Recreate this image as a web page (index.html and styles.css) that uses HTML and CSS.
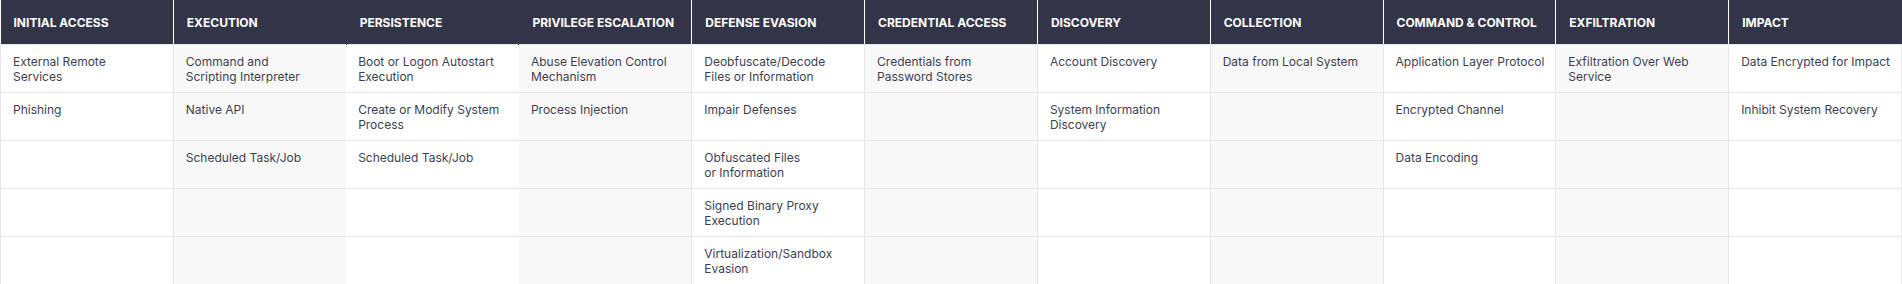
FILE: index.html
```html
<!DOCTYPE html>
<html lang="en">
<head>
<meta charset="utf-8">
<title>ATT&amp;CK Matrix</title>
<link rel="stylesheet" href="styles.css">
</head>
<body>
<table class="matrix">
  <thead>
    <tr>
      <th>Initial Access</th>
      <th>Execution</th>
      <th class="nb">Persistence</th>
      <th class="nb">Privilege Escalation</th>
      <th>Defense Evasion</th>
      <th>Credential Access</th>
      <th>Discovery</th>
      <th>Collection</th>
      <th>Command &amp; Control</th>
      <th>Exfiltration</th>
      <th>Impact</th>
    </tr>
  </thead>
  <tbody>
    <tr>
      <td>External Remote<br>Services</td>
      <td>Command and<br>Scripting Interpreter</td>
      <td class="nb">Boot or Logon Autostart<br>Execution</td>
      <td class="nb">Abuse Elevation Control<br>Mechanism</td>
      <td>Deobfuscate/Decode<br>Files or Information</td>
      <td>Credentials from<br>Password Stores</td>
      <td>Account Discovery</td>
      <td>Data from Local System</td>
      <td>Application Layer Protocol</td>
      <td>Exfiltration Over Web<br>Service</td>
      <td>Data Encrypted for Impact</td>
    </tr>
    <tr>
      <td>Phishing</td>
      <td>Native API</td>
      <td class="nb">Create or Modify System<br>Process</td>
      <td class="nb">Process Injection</td>
      <td>Impair Defenses</td>
      <td></td>
      <td>System Information<br>Discovery</td>
      <td></td>
      <td>Encrypted Channel</td>
      <td></td>
      <td>Inhibit System Recovery</td>
    </tr>
    <tr>
      <td></td>
      <td>Scheduled Task/Job</td>
      <td class="nb">Scheduled Task/Job</td>
      <td class="nb"></td>
      <td>Obfuscated Files<br>or Information</td>
      <td></td>
      <td></td>
      <td></td>
      <td>Data Encoding</td>
      <td></td>
      <td></td>
    </tr>
    <tr>
      <td></td>
      <td></td>
      <td class="nb"></td>
      <td class="nb"></td>
      <td>Signed Binary Proxy<br>Execution</td>
      <td></td>
      <td></td>
      <td></td>
      <td></td>
      <td></td>
      <td></td>
    </tr>
    <tr>
      <td></td>
      <td></td>
      <td class="nb"></td>
      <td class="nb"></td>
      <td>Virtualization/Sandbox<br>Evasion</td>
      <td></td>
      <td></td>
      <td></td>
      <td></td>
      <td></td>
      <td></td>
    </tr>
  </tbody>
</table>
</body>
</html>
```

FILE: styles.css
```css
html, body {
  margin: 0;
  padding: 0;
  background: #ffffff;
}

body {
  font-family: Inter, "Noto Sans", "Liberation Sans", sans-serif;
  color: #3d3f51;
}

.matrix {
  width: 100%;
  border-collapse: collapse;
  table-layout: fixed;
}

.matrix th {
  height: 44px;
  padding: 2px 6px 0 13px;
  background: #323447;
  color: #ffffff;
  font-size: 12px;
  font-weight: 700;
  text-transform: uppercase;
  text-align: left;
  vertical-align: middle;
  white-space: nowrap;
  border-left: 1px solid #ffffff;
  box-sizing: border-box;
}

.matrix th:first-child {
  border-left: none;
}

.matrix tbody tr {
  height: 48px;
}

.matrix td {
  padding: 9px 6px 0 12px;
  font-size: 12px;
  line-height: 15px;
  vertical-align: top;
  white-space: nowrap;
  border: 1px solid #e8e8e8;
  background: #ffffff;
}

.matrix td:nth-child(even) {
  background: #f8f8f8;
}

.matrix th.nb {
  border-left-color: #323447;
}

.matrix td.nb {
  border-left-style: hidden;
}
```
